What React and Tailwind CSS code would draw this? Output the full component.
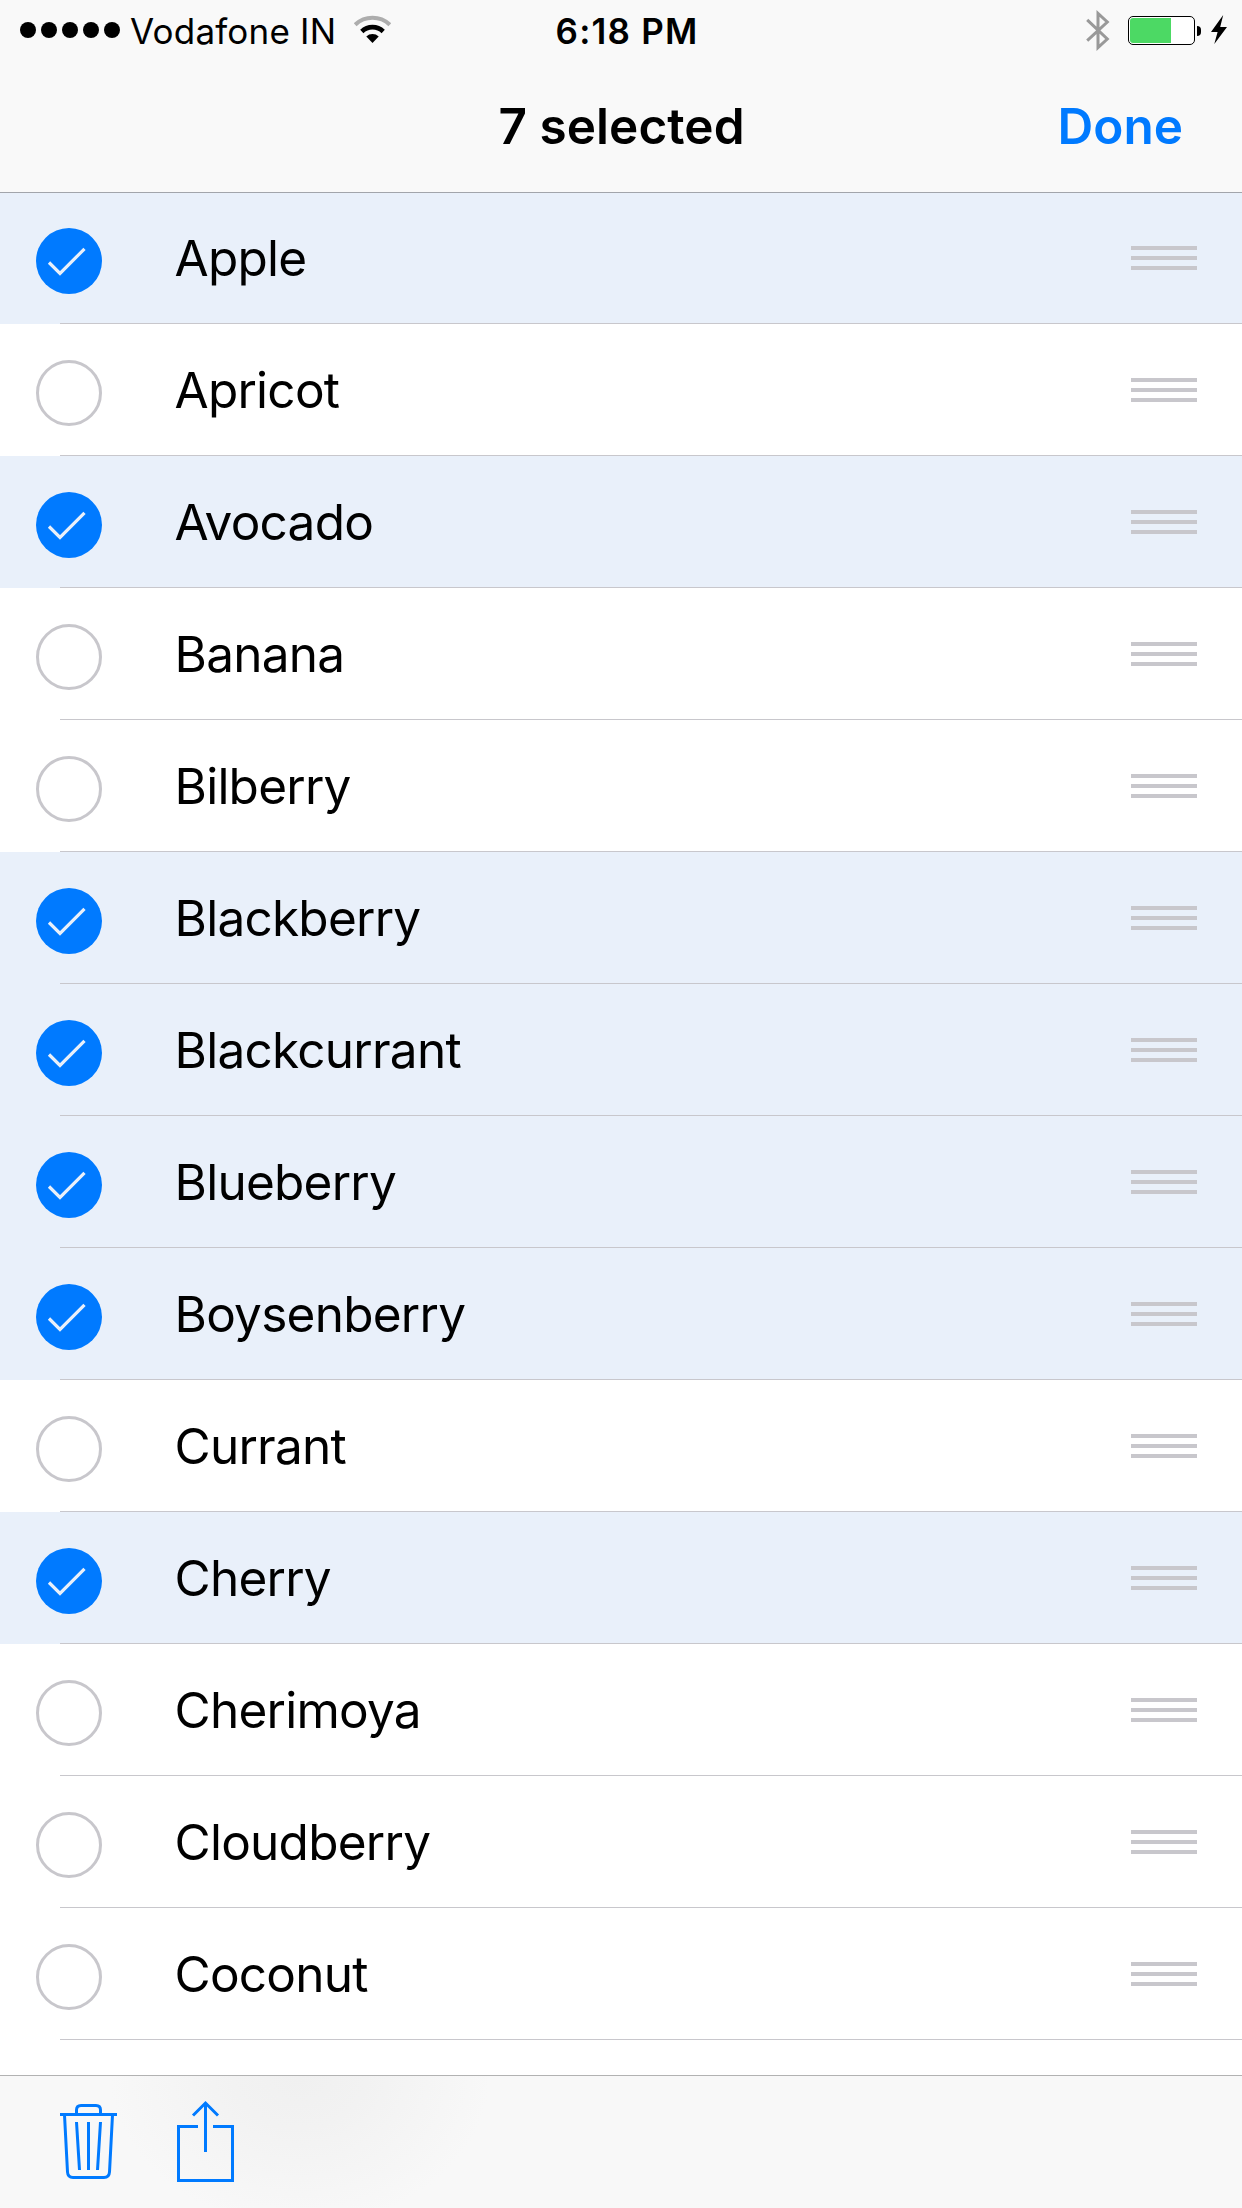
const fruits = [
  { name: "Apple", selected: true },
  { name: "Apricot", selected: false },
  { name: "Avocado", selected: true },
  { name: "Banana", selected: false },
  { name: "Bilberry", selected: false },
  { name: "Blackberry", selected: true },
  { name: "Blackcurrant", selected: true },
  { name: "Blueberry", selected: true },
  { name: "Boysenberry", selected: true },
  { name: "Currant", selected: false },
  { name: "Cherry", selected: true },
  { name: "Cherimoya", selected: false },
  { name: "Cloudberry", selected: false },
  { name: "Coconut", selected: false },
];

function StatusBar() {
  return (
    <div className="flex h-[60px] items-start justify-between">
      <div className="flex w-[420px] pl-5">
        <div className="mt-[22px] flex gap-[5px]">
          {[0, 1, 2, 3, 4].map((n) => (
            <span key={n} className="size-4 rounded-full bg-black" />
          ))}
        </div>
        <span className="ml-[10px] mt-[11px] w-[207px] text-[35px] leading-10 tracking-[0.2px] whitespace-nowrap">
          Vodafone IN
        </span>
        <svg className="ml-[17px] mt-[15px]" width="37" height="29" viewBox="0 0 37 29" fill="none">
          <path d="M1.2 9.7 A25 25 0 0 1 35.8 9.7" stroke="#adadad" strokeWidth="4" />
          <path d="M7.8 16.5 A15.2 15.2 0 0 1 29.2 16.5" stroke="#000" strokeWidth="4.6" />
          <path d="M12.3 21.5 A9 9 0 0 1 24.7 21.5 L18.5 28 Z" fill="#000" />
        </svg>
      </div>
      <span className="mt-[11px] pl-[12px] text-[35px] leading-10 font-semibold tracking-[1.2px] whitespace-nowrap">
        6:18 PM
      </span>
      <div className="flex w-[420px] justify-end pr-[15px]">
        <svg className="mt-[9px]" width="24" height="43" viewBox="0 0 24 43" fill="none">
          <path d="M1.2 10.8 L21.3 30 L12 38.5 V4.5 L21.3 13 L1.2 31.7" stroke="#999" strokeWidth="3" />
        </svg>
        <div className="ml-[18px] mt-4 h-[29px] w-[67px] rounded-[5px] border border-black bg-white p-px">
          <div className="h-[25px] w-[41px] rounded-l-[3px] bg-[#4cd964]" />
        </div>
        <div className="ml-[2px] mt-[26px] h-[10px] w-[4px] rounded-r-[4px] bg-black" />
        <svg className="ml-[10px] mt-[15px]" width="16" height="29" viewBox="0 0 16 29">
          <path d="M12.2 0 L0 17 H6.6 L3.3 29 L16 12 H9.2 Z" />
        </svg>
      </div>
    </div>
  );
}

function SelectMark({ selected }) {
  if (!selected) {
    return <span className="size-[66px] shrink-0 rounded-full border-3 border-[#c8c7cc]" />;
  }
  return (
    <svg className="shrink-0" width="66" height="66" viewBox="0 0 66 66" fill="none">
      <circle cx="33" cy="33" r="33" fill="#007aff" />
      <path d="M13 34.5 L24 45.5 L48.5 20.8" stroke="#e9f0fa" strokeWidth="3.2" />
    </svg>
  );
}

function Row({ name, selected }) {
  return (
    <li className={selected ? "h-[132px] bg-[#e9f0fa]" : "h-[132px] bg-white"}>
      <div className="flex h-[131px] items-start pl-9 pr-[45px]">
        <div className="mt-9 flex">
          <SelectMark selected={selected} />
        </div>
        <span className="ml-[72.5px] mt-[36px] flex-1 text-[49.5px] leading-[60px] tracking-[-0.75px] whitespace-nowrap">
          {name}
        </span>
        <div className="mt-[54px] flex w-[66px] flex-col gap-[6px]">
          <span className="h-1 bg-[#c8c7cc]" />
          <span className="h-1 bg-[#c8c7cc]" />
          <span className="h-1 bg-[#c8c7cc]" />
        </div>
      </div>
      <div className="ml-[60px] h-px bg-[#c8c7cc]" />
    </li>
  );
}

function Toolbar() {
  return (
    <footer className="flex h-[133px] shrink-0 items-start border-t border-[#b2b2b2] bg-[#f8f8f8] bg-[radial-gradient(ellipse_190px_150px_at_300px_0px,#f0f0f0,#f2f2f2_35%,#f8f8f8)] pl-[60px]">
      <button className="mt-[27px]" aria-label="Delete">
        <svg width="57" height="77" viewBox="0 0 57 77" fill="none" stroke="#007aff" strokeWidth="3">
          <path d="M0 11.5 H57" />
          <path d="M16.5 11 V7 Q16.5 2.5 21 2.5 H36 Q40.5 2.5 40.5 7 V11" />
          <path d="M4.5 12 L7.5 69 Q7.8 74.5 13 74.5 H44 Q49.2 74.5 49.5 69 L52.5 12" />
          <path d="M16.5 19 L19.5 67 M28.5 19 V67 M40.5 19 L37.5 67" />
        </svg>
      </button>
      <button className="ml-[60px] mt-[24px]" aria-label="Share">
        <svg width="57" height="83" viewBox="0 0 57 83" fill="none" stroke="#007aff" strokeWidth="3">
          <path d="M21 26.5 H1.5 V80.5 H55.5 V26.5 H36" />
          <path d="M28.5 52 V3 M16 15.5 L28.5 3 L41 15.5" />
        </svg>
      </button>
    </footer>
  );
}

export default function App() {
  return (
    <div className="flex h-[2208px] w-[1242px] flex-col overflow-hidden bg-white font-['Inter',sans-serif] text-black">
      <header className="relative z-10 -mb-px h-[193px] shrink-0 border-b border-[#a2a5ab] bg-[#f9f9f9]">
        <StatusBar />
        <div className="flex items-start justify-between">
          <span className="w-[300px]" />
          <h1 className="mt-[36px] pl-px text-[49.5px] leading-[60px] font-semibold tracking-[0.05px] whitespace-nowrap">
            7 selected
          </h1>
          <div className="flex w-[300px] justify-end pr-[59px]">
            <button className="mt-[36px] text-[49.5px] leading-[60px] font-semibold text-[#007aff]">
              Done
            </button>
          </div>
        </div>
      </header>
      <ul className="h-[1883px] shrink-0 overflow-hidden">
        {fruits.map((fruit) => (
          <Row key={fruit.name} name={fruit.name} selected={fruit.selected} />
        ))}
      </ul>
      <Toolbar />
    </div>
  );
}
